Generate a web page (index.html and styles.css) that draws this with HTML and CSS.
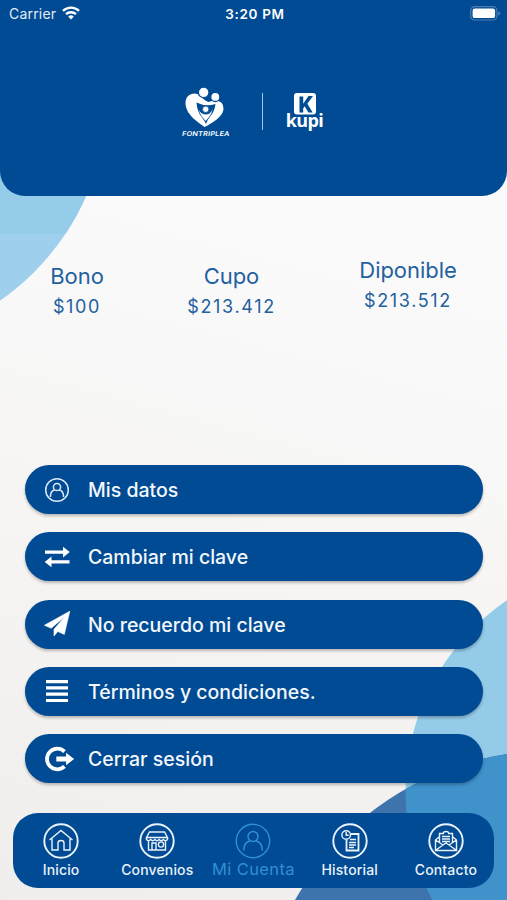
FILE: index.html
```html
<!DOCTYPE html>
<html lang="es">
<head>
<meta charset="utf-8">
<title>Mi Cuenta</title>
<link rel="stylesheet" href="styles.css">
</head>
<body>
<div class="screen">
  <svg class="backdrop" viewBox="0 0 507 900" aria-hidden="true">
    <defs>
      <clipPath id="upper"><rect width="507" height="234"/></clipPath>
      <clipPath id="ring"><circle cx="637.5" cy="792" r="232"/></clipPath>
    </defs>
    <circle cx="-142.7" cy="95.4" r="250" fill="#9ed0ed"/>
    <circle cx="-142.7" cy="95.4" r="250" fill="#94ccea" clip-path="url(#upper)"/>
    <circle cx="637.5" cy="792" r="232" fill="#94cbe8"/>
    <circle cx="550" cy="1043.5" r="292.6" fill="#3f73ac"/>
    <circle cx="550" cy="1043.5" r="292.6" fill="#4092cb" clip-path="url(#ring)"/>
  </svg>

  <header class="header">
    <div class="status">
      <div class="carrier"><span>Carrier</span>
        <svg width="18" height="14" viewBox="0 0 18 14" fill="none" stroke="#fff" stroke-width="2.4"><path d="M1 4.9a11.5 11.5 0 0 1 16 0M4 8.2a7.3 7.3 0 0 1 10 0"/><path d="M9 13.5 6.2 10.7a4 4 0 0 1 5.6 0z" fill="#fff" stroke="none"/></svg>
      </div>
      <div class="clock">3:20 PM</div>
      <svg class="battery" width="31" height="15" viewBox="0 0 31 15"><rect x=".7" y=".7" width="26.3" height="13.3" rx="4" fill="none" stroke="#4d7db5" stroke-width="1.2"/><rect x="2.6" y="2.6" width="22.5" height="9.5" rx="2.2" fill="#fff"/><path d="M28.3 5.2q2 .6 2 2.2t-2 2.2z" fill="#4d7db5"/></svg>
    </div>
    <div class="logos">
      <div class="fontriplea">
        <svg width="42" height="41" viewBox="0 0 42 41">
          <path d="M20.500 40C14 35 1.500 27.500 1.500 16 1.500 10 5.500 6.500 10.500 6.500c4 0 7 2.500 9 5.500q2 2 5 3 4-1.500 8-1.200 7 .7 7 7.700c0 8-11 14.500-19 18.500z" fill="#fff"/>
          <path d="M12.500 15.500q9 4.500 19 1.500-1 7.500-5 12-3 3.500-4.500 8-1.500-3.500-4.500-7-4.500-6-5-14.500z" fill="#004b93"/>
          <path d="M14.800 22.500q1.700 4.500 6.700 5 5 0 7.200-5.500-1 5-3.700 8l-3.300 4-4-4.500q-2-3-2.900-7z" fill="#fff"/>
          <circle cx="19.700" cy="5.400" r="5.300" fill="#fff" stroke="#004b93" stroke-width="1.300"/>
          <circle cx="31.300" cy="9.900" r="4.600" fill="#fff" stroke="#004b93" stroke-width="1.300"/>
          <circle cx="21.700" cy="22.300" r="3.200" fill="#fff" stroke="#004b93" stroke-width=".8"/>
        </svg>
        <span>FONTRIPLEA</span>
      </div>
      <div class="divider"></div>
      <div class="kupi">
        <svg width="22" height="22" viewBox="0 0 22 22"><rect width="22" height="21.500" rx="3" fill="#fff"/><path d="M5.500 3.500h3.700v7.200L14.500 3H19l-5.700 7.800 5.400 8.700h-4.300l-3.700-6.200-1.500 1.900v4.300H5.500z" fill="#004b93"/></svg>
        <span>kupi</span>
      </div>
    </div>
  </header>

  <section class="balances">
    <div class="balance"><h2>Bono</h2><p>$100</p></div>
    <div class="balance"><h2>Cupo</h2><p>$213.412</p></div>
    <div class="balance raised"><h2>Diponible</h2><p>$213.512</p></div>
  </section>

  <main class="options">
    <button class="option"><svg viewBox="0 0 32 30" fill="none" stroke="#dce9f8" stroke-width="1.5"><circle cx="14" cy="15" r="11.3"/><circle cx="14" cy="12" r="3.6"/><path d="M7.4 22q0-6.4 4.4-7.1M20.6 22q0-6.4-4.4-7.1"/></svg><span>Mis datos</span></button>
    <button class="option"><svg viewBox="0 0 32 30" fill="#fff"><path d="M2 8.400h18V4.700l6.800 5.400L20 15.500v-3.700H2zM26.500 18.200H8.500v-3.700L1.700 19.900l6.800 5.400v-3.700h18z"/></svg><span>Cambiar mi clave</span></button>
    <button class="option"><svg viewBox="0 0 32 30" fill="#fff"><path d="M26.800 2.200 1.400 16.300l6.800 2.900L22 7.500 11 20.300V27l3.800-4.600 6.500 3z" stroke="#fff" stroke-width=".6" stroke-linejoin="round"/></svg><span>No recuerdo mi clave</span></button>
    <button class="option"><svg viewBox="0 0 32 30" fill="#fff"><path d="M3 4h22v3.200H3zM3 10.300h22v3.200H3zM3 16.600h22v3.200H3zM3 22.900h22v3.200H3z"/></svg><span>Términos y condiciones.</span></button>
    <button class="option"><svg viewBox="0 0 32 30" fill="none" stroke="#fff" stroke-width="3.800"><path d="M21.500 7.600A10.300 10.300 0 1 0 21.500 22.400"/><path d="M13.300 12.600h9.800V8.800l8 6.200-8 6.200v-3.800h-9.800z" fill="#fff" stroke="none"/></svg><span>Cerrar sesión</span></button>
  </main>

  <nav class="tabs">
    <a class="tab"><svg viewBox="0 0 36 36"><circle cx="18" cy="18" r="16.700" stroke-width="1.900"/><path d="M6.500 17 18 7.500 29.500 17M9 15.500V27h6v-7q0-2.500 3-2.500t3 2.500v7h6V15.500"/></svg><span>Inicio</span></a>
    <a class="tab"><svg viewBox="0 0 36 36"><circle cx="18" cy="18" r="16.700" stroke-width="1.900"/><path d="M10.500 9h15l3 5.500h-21zM7.500 14.500v2q1.800 2.400 4.200 0 2.100 2.400 4.200 0 2.100 2.400 4.200 0 2.100 2.400 4.200 0 2.100 2.400 4.200 0v-2M9.500 18.500V27h17v-8.500M13 27v-7h4v7"/><circle cx="22" cy="21.500" r="2.600"/></svg><span>Convenios</span></a>
    <a class="tab active"><svg viewBox="0 0 36 36"><circle cx="18" cy="18" r="16.700"/><circle cx="18" cy="13.500" r="5"/><path d="M8.800 27.500q0-8 6.300-9.700M27.200 27.500q0-8-6.300-9.700"/></svg><span>Mi Cuenta</span></a>
    <a class="tab"><svg viewBox="0 0 36 36"><circle cx="18" cy="18" r="16.700" stroke-width="1.900"/><path d="M19 11h7.500v16.500h-12V17" stroke-width="1.800"/><circle cx="14.200" cy="12" r="4.300"/><path d="M14.200 9v3.200h2.500M18 16.500h6M17 19.500h7M17 22h7M17 24.500h5"/></svg><span>Historial</span></a>
    <a class="tab"><svg viewBox="0 0 36 36"><circle cx="18" cy="18" r="16.700" stroke-width="1.900"/><path d="M11.500 19V10.500h3.800q0-2 2.700-2t2.700 2h3.800V19M11 14l-3.500 3v10.500h21V17L25 14M7.500 17l7.500 5 3-2 3 2 7.500-5M8 27l7-5M28 27l-7-5M14 13.500h8M14 16h8M14 18.500h8"/></svg><span>Contacto</span></a>
  </nav>
</div>
</body>
</html>
```
FILE: styles.css
```css
* { box-sizing: border-box; }
body { margin: 0; font-family: Inter, "Liberation Sans", sans-serif; }
h2, p { margin: 0; font-weight: 400; }
svg { display: block; }

.screen {
  position: relative;
  width: 507px;
  height: 900px;
  overflow: hidden;
  display: flex;
  flex-direction: column;
  background: linear-gradient(195deg, #fafafa 30%, #f7f6f5 55%, #efeeec 100%);
}
.backdrop { position: absolute; inset: 0; width: 507px; height: 900px; }
.header, .balances, .options, .tabs { position: relative; }

.header {
  height: 196px;
  background: #004b93;
  border-radius: 0 0 25px 25px;
  color: #fff;
}
.status {
  display: grid;
  grid-template-columns: 1fr auto 1fr;
  align-items: center;
  height: 27px;
  padding: 0 6px 0 9px;
  font-size: 14px;
}
.carrier { display: flex; align-items: center; gap: 6px; color: #e3edf8; letter-spacing: .2px; }
.carrier svg { margin-top: -1px; }
.clock { font-weight: 600; font-size: 13.5px; letter-spacing: .65px; }
.battery { justify-self: end; }

.logos { display: flex; align-items: flex-start; padding: 60px 0 0 181px; }
.fontriplea { width: 49px; display: flex; flex-direction: column; align-items: center; }
.fontriplea svg { margin-right: 1px; }
.fontriplea span { font-size: 6.4px; line-height: 9px; font-weight: 600; letter-spacing: .15px; margin-top: 2px; transform: scaleX(1.15) skewX(-8deg); }
.divider { width: 1px; height: 37px; margin: 6px 24px 0 32px; background: #a8c3df; }
.kupi { display: flex; flex-direction: column; align-items: center; width: 35px; margin-top: 6px; }
.kupi span { font-family: "Open Sans", sans-serif; font-weight: 700; font-size: 18px; line-height: 17px; margin-top: -3px; letter-spacing: -.6px; }

.balances {
  display: grid;
  grid-template-columns: 154px 155px 198px;
  height: 269px;
  padding-top: 67px;
  align-items: start;
  text-align: center;
  color: #23609f;
}
.balance h2 { font-size: 22px; line-height: 27px; letter-spacing: -.05px; }
.balance p { font-size: 18px; line-height: 24px; margin-top: 5px; letter-spacing: 1.65px; }
.raised { margin-top: -6px; }

.options { display: flex; flex-direction: column; gap: 18.25px; padding: 0 24.5px 0 25px; }
.option {
  display: flex;
  align-items: center;
  gap: 13px;
  width: 100%;
  height: 49px;
  padding: 0 18px;
  border: 0;
  border-radius: 25px;
  background: #004b93;
  box-shadow: 0 2px 3px rgba(0, 0, 0, .25);
  color: #f3f7fc;
  font: 500 19.5px/24px Inter, sans-serif;
  letter-spacing: 0;
}
.option svg { width: 32px; height: 30px; flex: none; }
.option span { padding-top: 1px; }

.tabs {
  display: grid;
  grid-template-columns: repeat(5, 1fr);
  width: 481px;
  height: 75px;
  margin: 30px 0 0 13px;
  border-radius: 25px;
  background: #004b93;
}
.tab {
  display: flex;
  flex-direction: column;
  align-items: center;
  padding-top: 10px;
  color: #eaf2fb;
  font-size: 14px;
  font-weight: 500;
  line-height: 18px;
  letter-spacing: .15px;
  white-space: nowrap;
}
.tab svg { width: 36px; height: 36px; fill: none; stroke: currentColor; stroke-width: 1.4; }
.tab span { margin-top: 2px; }
.tab.active { color: #318fd6; font-size: 16.5px; font-weight: 400; letter-spacing: .4px; }
.tab.active span { margin-top: 1px; }
```
